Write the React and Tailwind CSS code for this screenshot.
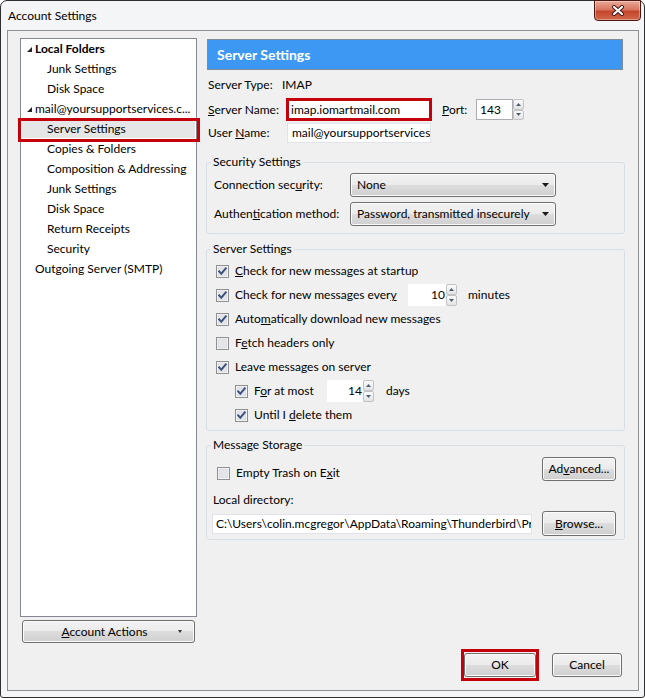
import React from "react";

const btnBg =
  "bg-[linear-gradient(#f2f2f2_0%,#ebebeb_50%,#dddddd_50%,#cfcfcf_100%)] border border-[#707070] rounded-[3px] shadow-[inset_0_0_0_1px_#fbfbfb]";

function Checkbox({ checked }) {
  return (
    <svg width="13" height="13" viewBox="0 0 13 13" className="shrink-0">
      <rect x="0.5" y="0.5" width="12" height="12" fill="#ffffff" stroke="#8e8f8f" />
      <rect x="2" y="2" width="9" height="9" fill="#e4e5e8" stroke="#d0d2d6" strokeWidth="0.6" />
      {checked && (
        <path d="M3.2 6.3 L5.3 8.7 L9.8 3.3" fill="none" stroke="#3d4f7e" strokeWidth="1.9" strokeLinecap="square" />
      )}
    </svg>
  );
}

function Tri({ up }) {
  return (
    <svg width="5" height="3" viewBox="0 0 5 3">
      {up ? <path d="M0 3 L2.5 0 L5 3 Z" fill="#4f5d78" /> : <path d="M0 0 L5 0 L2.5 3 Z" fill="#4f5d78" />}
    </svg>
  );
}

function Spinner({ className }) {
  return (
    <div className={"flex flex-col w-[11px] shrink-0 " + className}>
      <div className="flex-1 flex items-center justify-center border border-[#c3c3c3] rounded-[2px] bg-[linear-gradient(#fbfbfb,#e3e3e3)]">
        <Tri up />
      </div>
      <div className="flex-1 flex items-center justify-center border border-[#c3c3c3] rounded-[2px] bg-[linear-gradient(#fbfbfb,#e3e3e3)]">
        <Tri />
      </div>
    </div>
  );
}

function Select({ children }) {
  return (
    <div className={"w-[206px] h-[24px] flex items-center pl-[6px] pr-[6px] " + btnBg}>
      <span className="flex-1 whitespace-nowrap">{children}</span>
      <svg width="7" height="4" viewBox="0 0 7 4">
        <path d="M0 0 L7 0 L3.5 4 Z" fill="#1a1a1a" />
      </svg>
    </div>
  );
}

function CheckRow({ checked, children, indent }) {
  return (
    <div className={"h-[24px] flex items-center " + (indent ? "ml-[19px]" : "")}>
      <Checkbox checked={checked} />
      <span className="ml-[6px] whitespace-nowrap">{children}</span>
    </div>
  );
}

function TreeRow({ level, bold, selected, children }) {
  return (
    <div className="relative h-[20px] flex items-center">
      {selected && <div className="absolute inset-y-[1px] inset-x-[1px] bg-[#e6e6e6]" />}
      {selected && (
        <div className="absolute -top-[1px] -bottom-[3px] -left-[3px] -right-[4px] border-[3px] border-[#c4000b]" />
      )}
      {level === 0 ? (
        <div className="relative flex items-center pl-[6px]">
          <svg width="5" height="5" viewBox="0 0 5 5" className="mr-[3px]">
            <path d="M5 0 L5 5 L0 5 Z" fill="#262626" />
          </svg>
          <span className={"whitespace-nowrap " + (bold ? "font-bold" : "")}>{children}</span>
        </div>
      ) : level === 2 ? (
        <span className="relative pl-[14px] whitespace-nowrap">{children}</span>
      ) : (
        <span className="relative pl-[26px] whitespace-nowrap">{children}</span>
      )}
    </div>
  );
}

export default function App() {
  return (
    <div className="w-[645px] h-[698px] bg-white overflow-hidden font-['Lato','Noto_Sans',sans-serif] text-[12px] leading-[16px] text-black">
      <div className="h-full flex flex-col border border-[#2f2f2f] rounded-t-[7px] rounded-b-[3px] bg-[#f4f5f6]">
        {/* Title bar */}
        <div className="h-[29px] shrink-0 flex items-start">
          <div className="ml-[7px] mt-[7px]">Account Settings</div>
          <div className="ml-auto mr-[3px] -mt-[1px] w-[47px] h-[21px] rounded-b-[4px] border border-[#4f1712] bg-[linear-gradient(#eaa999_0%,#d9765f_45%,#c4462d_55%,#d0684b_100%)] shadow-[inset_0_0_0_1px_rgba(255,255,255,0.35)] flex items-center justify-center">
            <svg width="14" height="11" viewBox="0 0 14 11">
              <path d="M3 2 L11 9 M11 2 L3 9" stroke="#3b1410" strokeWidth="4" strokeLinecap="round" />
              <path d="M3 2 L11 9 M11 2 L3 9" stroke="#ffffff" strokeWidth="2.2" strokeLinecap="round" />
            </svg>
          </div>
        </div>

        {/* Client area */}
        <div className="ml-[6px] mr-[5px] h-[661px] shrink-0 border border-[#8e8f8f] bg-[#f0f0f0] flex pl-[12px] pt-[7px] pr-[13px]">
          {/* Left column */}
          <div className="w-[177px] shrink-0 flex flex-col">
            <div className="h-[579px] bg-white border border-[#828790]">
              <TreeRow level={0} bold>Local Folders</TreeRow>
              <TreeRow level={1}>Junk Settings</TreeRow>
              <TreeRow level={1}>Disk Space</TreeRow>
              <TreeRow level={0}>mail@yoursupportservices.c...</TreeRow>
              <TreeRow level={1} selected>Server Settings</TreeRow>
              <TreeRow level={1}>Copies &amp; Folders</TreeRow>
              <TreeRow level={1}>Composition &amp; Addressing</TreeRow>
              <TreeRow level={1}>Junk Settings</TreeRow>
              <TreeRow level={1}>Disk Space</TreeRow>
              <TreeRow level={1}>Return Receipts</TreeRow>
              <TreeRow level={1}>Security</TreeRow>
              <TreeRow level={2}>Outgoing Server (SMTP)</TreeRow>
            </div>
            <div className={"mt-[3px] mx-[2px] h-[23px] flex items-center " + btnBg}>
              <span className="flex-1 text-center pl-[8px]">
                <u>A</u>ccount Actions
              </span>
              <svg width="4" height="3" viewBox="0 0 4 3" className="mr-[12px]">
                <path d="M0 0 L4 0 L2 3 Z" fill="#333" />
              </svg>
            </div>
          </div>

          {/* Right column */}
          <div className="ml-[8px] w-[420px] shrink-0 flex flex-col pb-[13px]">
            <div className="mt-[1px] mx-[2px] h-[31px] bg-[#3d98f4] border border-[#7c8a99] flex items-center pl-[9px] text-white font-bold text-[14px]">
              Server Settings
            </div>

            <div className="mt-[7px] h-[16px] flex items-center pl-[3px]">
              <span className="w-[74px]">Server Type:</span>
              <span>IMAP</span>
            </div>

            <div className="mt-[5px] h-[23px] flex items-center pl-[3px]">
              <span className="w-[78px] whitespace-nowrap">
                <u>S</u>erver Name:
              </span>
              <div className="w-[146px] h-[23px] border-[3px] border-[#c4000b] bg-white pl-[2px] flex items-center whitespace-nowrap">
                imap.iomartmail.com
              </div>
              <span className="ml-[10px] w-[34px]">
                <u>P</u>ort:
              </span>
              <div className="w-[37px] h-[21px] border border-[#abadb3] bg-white pl-[3px] flex items-center">143</div>
              <Spinner className="h-[21px]" />
            </div>

            <div className="mt-[2px] h-[20px] flex items-center pl-[3px]">
              <span className="w-[79px] whitespace-nowrap">
                User <u>N</u>ame:
              </span>
              <div className="w-[144px] h-[20px] border border-[#e2e3ea] bg-white pl-[4px] flex items-center overflow-hidden whitespace-nowrap">
                mail@yoursupportservices.com
              </div>
            </div>

            <fieldset className="mt-[11px] ml-[1px] w-[419px] border border-[#d5dfe5] rounded-[3px] pl-[7px] pt-[3px] pb-[7px]">
              <legend className="ml-[-3px] px-[2px] leading-[16px]">Security Settings</legend>
              <div className="h-[24px] flex items-center">
                <span className="w-[136px] whitespace-nowrap">
                  Connection sec<u>u</u>rity:
                </span>
                <Select>None</Select>
              </div>
              <div className="mt-[5px] h-[24px] flex items-center">
                <span className="w-[136px] whitespace-nowrap">
                  Authen<u>t</u>ication method:
                </span>
                <Select>Password, transmitted insecurely</Select>
              </div>
            </fieldset>

            <fieldset className="mt-[7px] ml-[1px] w-[419px] border border-[#d5dfe5] rounded-[3px] pl-[9px] pt-[2px] pb-[3px]">
              <legend className="ml-[-5px] px-[2px] leading-[16px]">Server Settings</legend>
              <CheckRow checked>
                <u>C</u>heck for new messages at startup
              </CheckRow>
              <div className="h-[24px] flex items-center">
                <Checkbox checked />
                <span className="ml-[6px] w-[173px] whitespace-nowrap">
                  Check for new messages ever<u>y</u>
                </span>
                <div className="w-[38px] h-[22px] bg-white flex items-center justify-end pr-[1px]">10</div>
                <Spinner className="h-[22px]" />
                <span className="ml-[11px]">minutes</span>
              </div>
              <CheckRow checked>
                Auto<u>m</u>atically download new messages
              </CheckRow>
              <CheckRow>
                F<u>e</u>tch headers only
              </CheckRow>
              <CheckRow checked>
                Leave messa<u>g</u>es on server
              </CheckRow>
              <div className="h-[24px] flex items-center ml-[19px]">
                <Checkbox checked />
                <span className="ml-[6px] w-[73px] whitespace-nowrap">
                  F<u>o</u>r at most
                </span>
                <div className="w-[36px] h-[22px] bg-white flex items-center justify-end pr-[1px]">14</div>
                <Spinner className="h-[22px]" />
                <span className="ml-[12px]">days</span>
              </div>
              <CheckRow checked indent>
                Until I <u>d</u>elete them
              </CheckRow>
            </fieldset>

            <fieldset className="mt-[6px] ml-[1px] w-[419px] border border-[#d5dfe5] rounded-[3px] pl-[5px] pr-[8px] pt-[4px] pb-[3px]">
              <legend className="ml-[-1px] px-[2px] leading-[16px]">Message Storage</legend>
              <div className="h-[24px] flex items-start">
                <div className="ml-[5px] mt-[8px] h-[16px] flex items-center">
                  <Checkbox />
                  <span className="ml-[6px] whitespace-nowrap">
                    Empty Trash on E<u>x</u>it
                  </span>
                </div>
                <div className={"ml-auto w-[74px] h-[24px] flex items-center justify-center " + btnBg}>
                  Ad<u>v</u>anced...
                </div>
              </div>
              <div className="mt-[11px] h-[16px] ml-[1px] flex items-center">Local directory:</div>
              <div className="mt-[3px] h-[25px] flex items-center">
                <div className="w-[320px] h-[20px] border border-[#e2e3ea] bg-white pl-[3px] flex items-center overflow-hidden whitespace-nowrap">
                  {"C:\\Users\\colin.mcgregor\\AppData\\Roaming\\Thunderbird\\Profiles\\mail"}
                </div>
                <div className={"ml-auto w-[74px] h-[25px] flex items-center justify-center " + btnBg}>
                  <u>B</u>rowse...
                </div>
              </div>
            </fieldset>

            <div className="mt-auto flex justify-end pr-[3px]">
              <div className="relative mr-[16px]">
                <div className={"w-[72px] h-[24px] flex items-center justify-center " + btnBg}>OK</div>
                <div className="absolute -top-[4px] -bottom-[4px] -left-[3px] -right-[3px] border-[3px] border-[#c4000b]" />
              </div>
              <div className={"w-[70px] h-[24px] flex items-center justify-center " + btnBg}>Cancel</div>
            </div>
          </div>
        </div>
      </div>
    </div>
  );
}
